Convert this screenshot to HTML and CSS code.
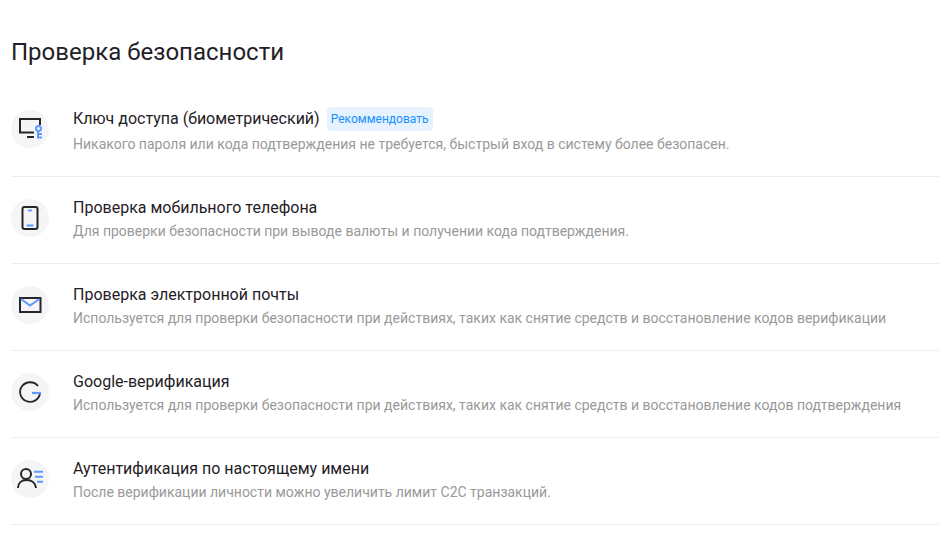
FILE: index.html
```html
<!DOCTYPE html>
<html lang="ru">
<head>
    <meta charset="UTF-8">
    <meta name="viewport" content="width=device-width, initial-scale=1.0">
    <title>Проверка безопасности</title>
    <link rel="stylesheet" href="styles.css">
</head>
<body>
    <div class="container">
        <h1 class="page-title">Проверка безопасности</h1>

        <div class="security-list">
            <div class="security-item">
                <div class="item-icon">
                    <svg width="24" height="24" viewBox="0 0 24 24" fill="none">
                        <path d="M22 8V2H2V15.5H16" stroke="#24262b" stroke-width="2"/>
                        <path d="M9 20H16" stroke="#24262b" stroke-width="2"/>
                        <circle cx="20.5" cy="11.5" r="2.5" stroke="#5f98ff" stroke-width="2"/>
                        <path d="M20 14V21.5M20 17H24M20 20.5H24" stroke="#5f98ff" stroke-width="2"/>
                    </svg>
                </div>
                <div class="item-text">
                    <div class="item-name has-badge">Ключ доступа (биометрический) <span class="badge">Рекоммендовать</span></div>
                    <div class="item-desc">Никакого пароля или кода подтверждения не требуется, быстрый вход в систему более безопасен.</div>
                </div>
            </div>

            <div class="security-item">
                <div class="item-icon">
                    <svg width="24" height="24" viewBox="0 0 24 24" fill="none">
                        <rect x="4.5" y="1" width="15" height="22" rx="2" stroke="#24262b" stroke-width="2"/>
                        <path d="M10 4.5H14" stroke="#5f98ff" stroke-width="1.8"/>
                        <path d="M8.5 19.5H15.5" stroke="#5f98ff" stroke-width="2"/>
                    </svg>
                </div>
                <div class="item-text">
                    <div class="item-name">Проверка мобильного телефона</div>
                    <div class="item-desc">Для проверки безопасности при выводе валюты и получении кода подтверждения.</div>
                </div>
            </div>

            <div class="security-item">
                <div class="item-icon">
                    <svg width="24" height="24" viewBox="0 0 24 24" fill="none">
                        <rect x="2" y="5" width="20.5" height="14" stroke="#24262b" stroke-width="2"/>
                        <path d="M3 6L12 12.5L21.5 6" stroke="#5f98ff" stroke-width="2"/>
                    </svg>
                </div>
                <div class="item-text">
                    <div class="item-name">Проверка электронной почты</div>
                    <div class="item-desc">Используется для проверки безопасности при действиях, таких как снятие средств и восстановление кодов верификации</div>
                </div>
            </div>

            <div class="security-item">
                <div class="item-icon">
                    <svg width="24" height="24" viewBox="0 0 24 24" fill="none">
                        <path d="M20 6A10 9.8 0 1 0 22 13.5" stroke="#24262b" stroke-width="1.8"/>
                        <path d="M14 13H23" stroke="#5f98ff" stroke-width="2.2"/>
                    </svg>
                </div>
                <div class="item-text">
                    <div class="item-name">Google-верификация</div>
                    <div class="item-desc">Используется для проверки безопасности при действиях, таких как снятие средств и восстановление кодов подтверждения</div>
                </div>
            </div>

            <div class="security-item">
                <div class="item-icon">
                    <svg width="26" height="24" viewBox="0 0 26 24" fill="none">
                        <circle cx="9" cy="7" r="5" stroke="#24262b" stroke-width="2"/>
                        <path d="M1 21C1 16 4.5 13 9.5 13C14.5 13 18.5 16 19 21" stroke="#24262b" stroke-width="2"/>
                        <path d="M17 4.7H26M18 9.7H26M20 14.7H26" stroke="#5f98ff" stroke-width="2"/>
                    </svg>
                </div>
                <div class="item-text">
                    <div class="item-name">Аутентификация по настоящему имени</div>
                    <div class="item-desc">После верификации личности можно увеличить лимит C2C транзакций.</div>
                </div>
            </div>
        </div>
    </div>
</body>
</html>
```
FILE: styles.css
```css
* {
    margin: 0;
    padding: 0;
    box-sizing: border-box;
}

body {
    font-family: Roboto, "Liberation Sans", sans-serif;
    background: #fff;
    color: #1f2126;
}

.container {
    padding: 38px 0 0 11px;
}

.page-title {
    font-size: 24px;
    line-height: 28px;
    font-weight: 400;
    margin-bottom: 22px;
}

.security-item {
    display: flex;
    align-items: flex-start;
    gap: 24px;
    padding: 20px 0 22px;
    border-bottom: 1px solid #eeeeee;
}

.item-icon {
    width: 38px;
    height: 38px;
    margin-top: 2px;
    flex-shrink: 0;
    border-radius: 50%;
    background: #f5f5f5;
    display: flex;
    align-items: center;
    justify-content: center;
}

.item-name {
    font-size: 16px;
    line-height: 22px;
    height: 22px;
    display: flex;
    align-items: center;
    gap: 7px;
}

.item-name.has-badge {
    margin-bottom: 4px;
}

.item-desc {
    font-size: 14px;
    line-height: 20px;
    color: #999999;
    margin-top: 2px;
}

.badge {
    font-size: 12px;
    line-height: 24px;
    padding: 0 4px;
    border-radius: 4px;
    background: #e6f3ff;
    color: #1890ff;
}
```
